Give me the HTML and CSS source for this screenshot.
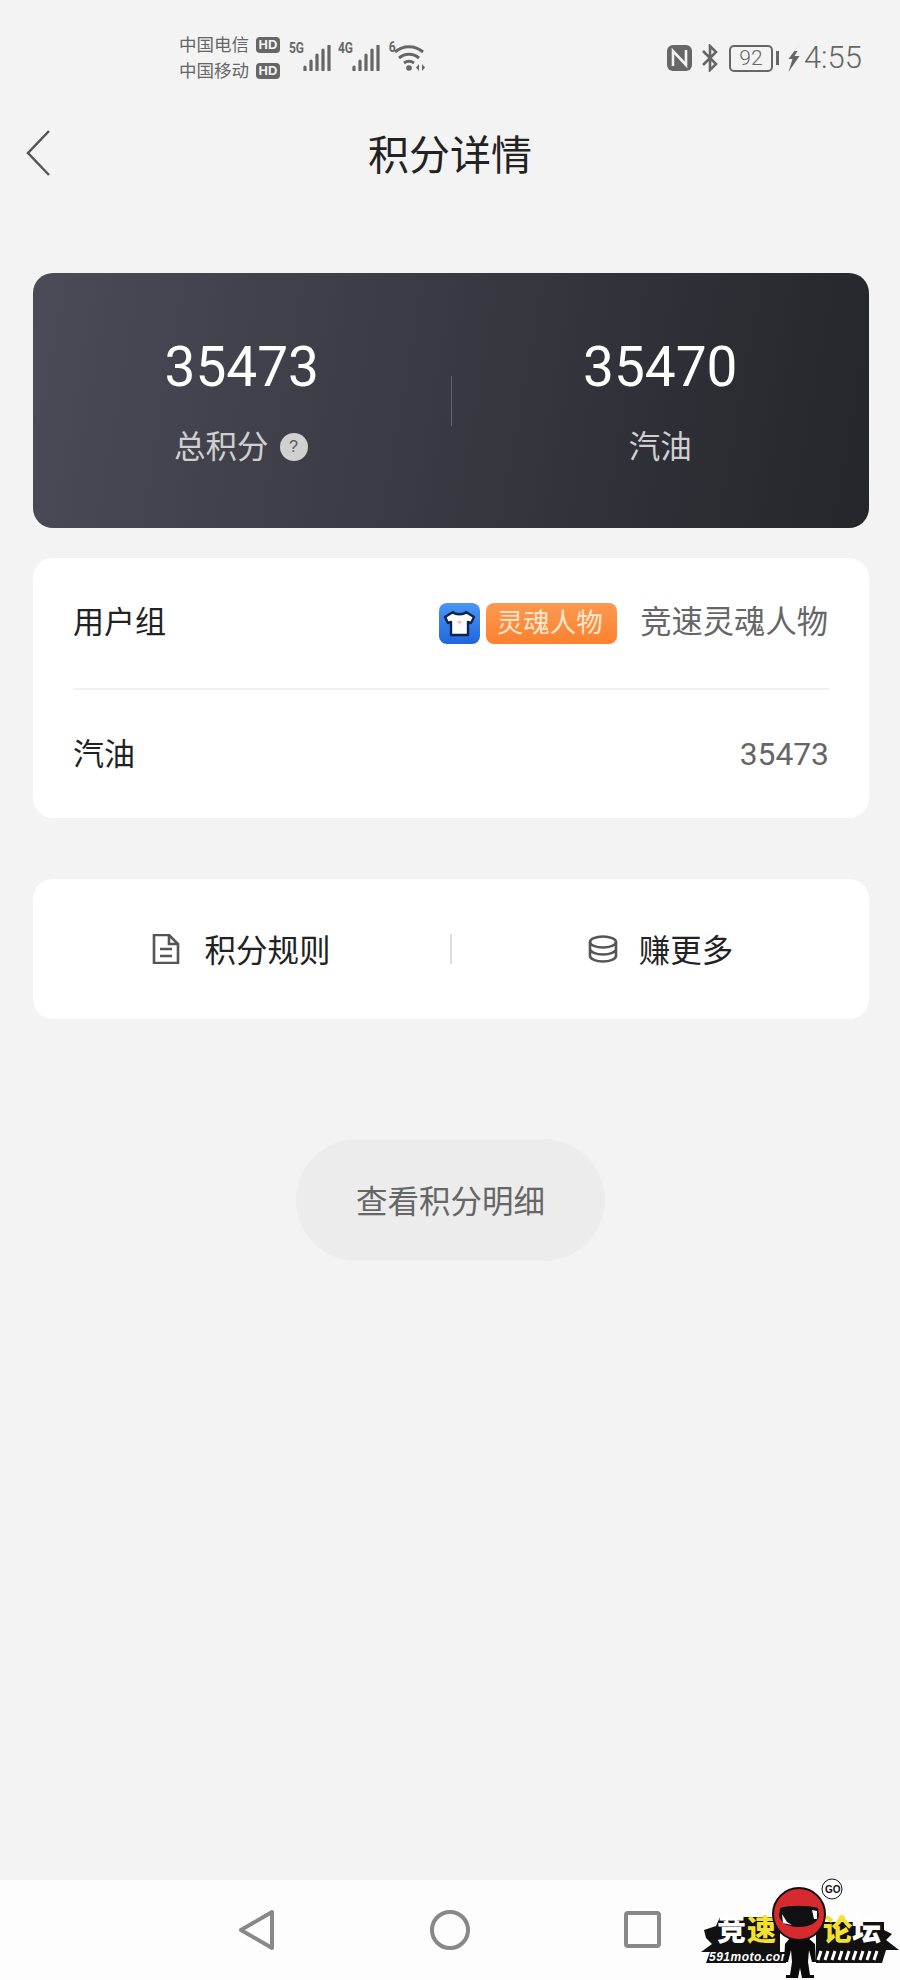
FILE: index.html
```html
<!DOCTYPE html>
<html lang="zh-CN">

<head>
    <meta charset="UTF-8"/>
    <meta content="width=device-width, initial-scale=1.0" name="viewport"/>
    <title>积分详情</title>
    <link rel="stylesheet" href="styles.css">
</head>

<body>
    <div class="page">
        <!-- 状态栏 -->
        <div class="status">
            <div class="carriers">
                <div class="carrier"><span>中国电信</span><b class="hd">HD</b></div>
                <div class="carrier"><span>中国移动</span><b class="hd">HD</b></div>
            </div>
            <div class="net">
                <span class="net-type">5G</span>
                <svg class="bars" viewBox="0 0 28 26" width="28" height="26">
                    <path d="M2 22v3M8 16v9M14 10v15M20 5v20M26 1v24"/>
                </svg>
            </div>
            <div class="net">
                <span class="net-type">4G</span>
                <svg class="bars" viewBox="0 0 28 26" width="28" height="26">
                    <path d="M2 22v3M8 16v9M14 10v15M20 5v20M26 1v24"/>
                </svg>
            </div>
            <div class="net net-wifi">
                <span class="net-type">6</span>
                <svg class="wifi" viewBox="0 0 36 28" width="36" height="28">
                    <path class="arc" d="M2 8C10 1 22 1 30 8M6 14c6-5 14-5 20 0M11 19c3-2 7-2 10 0"/>
                    <circle cx="16" cy="24" r="2.800"/>
                    <path d="M26 20v7l-3-3.500zM29 20v7l3-3.500z"/>
                </svg>
            </div>
            <div class="status-right">
                <svg viewBox="0 0 25 26" width="25" height="26">
                    <rect width="25" height="26" rx="6" fill="#666"/>
                    <path d="M6 21V6l13 14V5" fill="none" stroke="#f3f3f3" stroke-width="2.600"/>
                </svg>
                <svg class="bt" viewBox="0 0 18 28" width="18" height="28">
                    <path d="M2 7l13 13-6 6V2l6 6L2 21" fill="none" stroke="#666" stroke-width="2.600"/>
                </svg>
                <div class="battery"><span>92</span></div>
                <i class="battery-nub"></i>
                <svg class="bolt" viewBox="0 0 12 28" width="13" height="28">
                    <path d="M12 0L1 15h4l-4 13 11-16H7l3-5H7z" fill="#666"/>
                </svg>
                <span class="time">4:55</span>
            </div>
        </div>

        <!-- 标题 -->
        <div class="header">
            <svg class="back" viewBox="0 0 24 46" width="24" height="46">
                <path d="M23 1L2 23l21 22" fill="none" stroke="#555" stroke-width="2.500"/>
            </svg>
            <h1 class="title">积分详情</h1>
            <div></div>
        </div>

        <div class="main">
            <div class="score-card">
                <div class="score-col">
                    <div class="score-num">35473</div>
                    <div class="score-label">总积分<i class="help">?</i></div>
                </div>
                <div class="score-line"></div>
                <div class="score-col">
                    <div class="score-num">35470</div>
                    <div class="score-label">汽油</div>
                </div>
            </div>

            <div class="info-card">
                <div class="row row-first">
                    <span class="row-name">用户组</span>
                    <div class="row-right">
                        <svg class="shirt" viewBox="0 0 41 41" width="41" height="41">
                            <defs>
                                <linearGradient id="blue" x1="0" y1="0" x2="0" y2="1">
                                    <stop offset="0" stop-color="#4a97f5"/>
                                    <stop offset="1" stop-color="#2166dc"/>
                                </linearGradient>
                            </defs>
                            <rect width="41" height="41" rx="8" fill="url(#blue)"/>
                            <path d="M14 9c2 3 11 3 13 0l8 5-3 6-3-1v13H12V19l-3 1-3-6z" fill="#fff" stroke="#0d2350" stroke-width="2.400" stroke-linejoin="round"/>
                            <path d="M18 18h5l-2.500 4z" fill="#f3c79b"/>
                        </svg>
                        <span class="tag">灵魂人物</span>
                        <span class="row-value">竞速灵魂人物</span>
                    </div>
                </div>
                <div class="row">
                    <span class="row-name">汽油</span>
                    <span class="row-num">35473</span>
                </div>
            </div>

            <div class="link-card">
                <div class="link">
                    <svg viewBox="0 0 28 30" width="28" height="30">
                        <path d="M2 1h15l9 9v19H2z M17 1v9h9 M8 15h12M8 22h12" fill="none" stroke="#555" stroke-width="2.600"/>
                    </svg>
                    <span class="link-text">积分规则</span>
                </div>
                <div class="link-line"></div>
                <div class="link">
                    <svg class="coins" viewBox="0 0 30 28" width="30" height="28">
                        <ellipse cx="15" cy="7" rx="13" ry="5.500" fill="none" stroke="#555" stroke-width="2.600"/>
                        <path d="M2 7v14c0 3 6 5.500 13 5.500s13-2.500 13-5.500V7M2 14c0 3 6 5.500 13 5.500s13-2.500 13-5.500" fill="none" stroke="#555" stroke-width="2.600"/>
                    </svg>
                    <span class="link-text">赚更多</span>
                </div>
            </div>

            <div class="detail-btn">查看积分明细</div>
        </div>

        <!-- 底部导航 -->
        <div class="nav">
            <svg viewBox="0 0 38 42" width="38" height="42">
                <path d="M3 21L34 3v36z"/>
            </svg>
            <svg viewBox="0 0 42 42" width="42" height="42">
                <circle cx="21" cy="21" r="18"/>
            </svg>
            <svg viewBox="0 0 38 38" width="38" height="38">
                <rect x="2" y="2" width="33" height="33" rx="2"/>
            </svg>
        </div>

        <!-- 水印 -->
        <svg class="logo" viewBox="0 0 240 120" width="240" height="120">
            <path class="logo-bg" d="M44 70L56 66 60 57H120V92H126V103H46L50 92H41L52 84 46 78z"/>
            <path class="logo-bg" d="M156 62H224V70L232 74 226 80 239 90H226L222 103H156z"/>
            <text class="logo-cn" x="57" y="81">竞</text>
            <text class="logo-cn logo-yellow" x="87" y="81">速</text>
            <text class="logo-cn logo-yellow" x="163" y="81">论</text>
            <text class="logo-cn" x="192" y="81">坛</text>
            <text class="logo-en" x="49" y="101">591moto.com</text>
            <path class="logo-stripes" d="M158 100l3-9M165 100l3-9M172 100l3-9M179 100l3-9M186 100l3-9M193 100l3-9M200 100l3-9M207 100l3-9M214 100l3-9"/>
            <path class="logo-man" d="M130 78h18l7 6 1 18-4 0-3-12-1 12 2 13h4v3h-12l-2-10-2 10h-12v-3h4l2-13-1-12-3 12h-4l1-18z"/>
            <circle class="logo-head" cx="139" cy="54" r="26"/>
            <path class="logo-visor" d="M120 48c10-3 28-3 38 0l1 8c-2 7-9 11-20 11s-18-4-20-11z"/>
            <path class="logo-glint" d="M122 54l5 8 5 3-9-2zM152 50l5 1 0 8-3 0z"/>
            <circle class="logo-bubble" cx="172" cy="29" r="10"/>
            <text class="logo-go" x="165" y="33">GO</text>
        </svg>
    </div>
</body>

</html>
```

FILE: styles.css
```css
* {
    margin: 0;
    padding: 0;
    box-sizing: border-box;
}

body {
    background: #f3f3f3;
    font-family: "Noto Sans CJK SC", "Liberation Sans", sans-serif;
}

.page {
    width: 900px;
    height: 1980px;
    position: relative;
    display: flex;
    flex-direction: column;
    overflow: hidden;
}

/* 状态栏 */
.status {
    height: 116px;
    padding: 0 38px 0 179px;
    display: flex;
    align-items: center;
    color: #666;
}

.carriers {
    display: flex;
    flex-direction: column;
    gap: 4px;
    margin-right: 7px;
    margin-top: -3px;
}

.carrier {
    display: flex;
    align-items: center;
    gap: 4px;
    font-size: 17.5px;
    line-height: 22px;
}

.hd {
    width: 24px;
    height: 16px;
    margin-top: 2px;
    margin-left: 3px;
    border-radius: 4px;
    background: #666;
    color: #f3f3f3;
    font: bold 13px/16px "Liberation Sans", sans-serif;
    text-align: center;
}

.net {
    display: flex;
    align-items: flex-start;
    margin-right: 5px;
}

.net-wifi {
    margin-left: 3px;
}

.net-type {
    font: bold 15px/16px "Roboto", sans-serif;
    transform: scaleX(0.8);
    margin-top: -5px;
    margin-right: -3px;
}

.bars path {
    fill: none;
    stroke: #666;
    stroke-width: 3.200;
    stroke-linecap: round;
}

.wifi {
    fill: #666;
}

.wifi .arc {
    fill: none;
    stroke: #666;
    stroke-width: 3;
}

.status-right {
    margin-left: auto;
    display: flex;
    align-items: center;
}

.bt {
    margin-left: 9px;
}

.battery {
    width: 44px;
    height: 27px;
    margin-left: 10px;
    border: 2px solid #666;
    border-radius: 5px;
    font: 300 21px/23px "Roboto", sans-serif;
    text-align: center;
}

.battery-nub {
    width: 3px;
    height: 14px;
    margin-left: 3px;
    background: #666;
}

.bolt {
    margin-left: 8px;
}

.time {
    margin-left: 4px;
    font: 300 31px/36px "Roboto", sans-serif;
}

/* 标题 */
.header {
    height: 74px;
    padding: 0 26px;
    display: grid;
    grid-template-columns: 1fr auto 1fr;
    align-items: center;
}

.title {
    font-size: 41px;
    font-weight: 400;
    line-height: 50px;
    color: #222;
    margin-bottom: 2px;
}

.main {
    padding: 83px 31px 0 33px;
    flex: 1;
}

/* 积分卡片 */
.score-card {
    height: 255px;
    border-radius: 20px;
    background: linear-gradient(100deg, #4b4b58, #25262b);
    display: flex;
    align-items: center;
}

.score-col {
    flex: 1;
    text-align: center;
}

.score-num {
    font: 400 55px/64px "Roboto", sans-serif;
    color: #fff;
}

.score-label {
    margin-top: 23px;
    font-size: 31.5px;
    line-height: 44px;
    color: #cfcfcf;
    display: flex;
    justify-content: center;
    align-items: center;
    gap: 11px;
}

.help {
    width: 28px;
    height: 28px;
    margin-top: 6px;
    margin-right: 2px;
    border-radius: 50%;
    background: #d0d0d0;
    color: #555;
    font: normal 16px/28px "Liberation Sans", sans-serif;
}

.score-line {
    width: 1px;
    height: 50px;
    background: rgba(255, 255, 255, 0.22);
}

/* 用户组 */
.info-card {
    margin-top: 30px;
    height: 260px;
    padding: 0 40px;
    border-radius: 20px;
    background: #fff;
}

.row {
    height: 130px;
    display: flex;
    justify-content: space-between;
    align-items: center;
}

.row-first {
    height: 132px;
    border-bottom: 2px solid #f1f1f1;
}

.row-name {
    font-size: 31px;
    color: #222;
    margin-bottom: 8px;
}

.row-right {
    display: flex;
    align-items: center;
    margin-right: 1px;
}

.tag {
    margin-left: 6px;
    margin-right: 23px;
    width: 131px;
    height: 41px;
    border-radius: 8px;
    background: linear-gradient(#fd9a50, #fb8130);
    color: #ffe8d2;
    font-size: 26.5px;
    line-height: 36px;
    text-indent: -4px;
    text-align: center;
}

.row-value {
    font-size: 31.3px;
    color: #666;
    margin-bottom: 7px;
}

.row-num {
    font: 400 31.800px "Roboto", sans-serif;
    color: #666;
    margin-bottom: 2px;
}

/* 规则 */
.link-card {
    margin-top: 61px;
    height: 140px;
    border-radius: 20px;
    background: #fff;
    display: flex;
    align-items: center;
}

.link {
    flex: 1;
    display: flex;
    justify-content: center;
    align-items: center;
    gap: 24px;
    font-size: 31.5px;
    color: #222;
}

.link-text {
    margin-bottom: 3px;
}

.coins {
    margin-right: -3px;
}

.link-line {
    width: 2px;
    height: 30px;
    background: #ddd;
}

.detail-btn {
    margin: 120px 0 0 263px;
    width: 309px;
    height: 122px;
    border-radius: 61px;
    background: #ececec;
    color: #666;
    font-size: 31.5px;
    line-height: 120px;
    text-align: center;
}

/* 底部导航 */
.nav {
    height: 100px;
    background: #fdfdfd;
    display: flex;
    justify-content: center;
    align-items: center;
    gap: 153px;
}

.nav svg {
    fill: none;
    stroke: #888;
    stroke-width: 4;
    stroke-linejoin: round;
}

/* 水印 */
.logo {
    position: absolute;
    right: 0;
    bottom: 0;
}

.logo-bg {
    fill: #111;
}

.logo-cn {
    font: 900 29px "Noto Sans CJK SC", sans-serif;
    fill: #fff;
}

.logo-yellow {
    fill: #f4e12f;
}

.logo-en {
    font: italic bold 12px "Liberation Sans", sans-serif;
    letter-spacing: 0.5px;
    fill: #fff;
}

.logo-stripes {
    stroke: #fff;
    stroke-width: 3;
}

.logo-man {
    fill: #0a0a0a;
}

.logo-head {
    fill: #d62a2e;
    stroke: #111;
    stroke-width: 2;
}

.logo-visor {
    fill: #111;
}

.logo-glint {
    fill: #fff;
}

.logo-bubble {
    fill: #fff;
    stroke: #111;
    stroke-width: 1;
}

.logo-go {
    font: bold 10px "Liberation Sans", sans-serif;
    fill: #111;
}
```
